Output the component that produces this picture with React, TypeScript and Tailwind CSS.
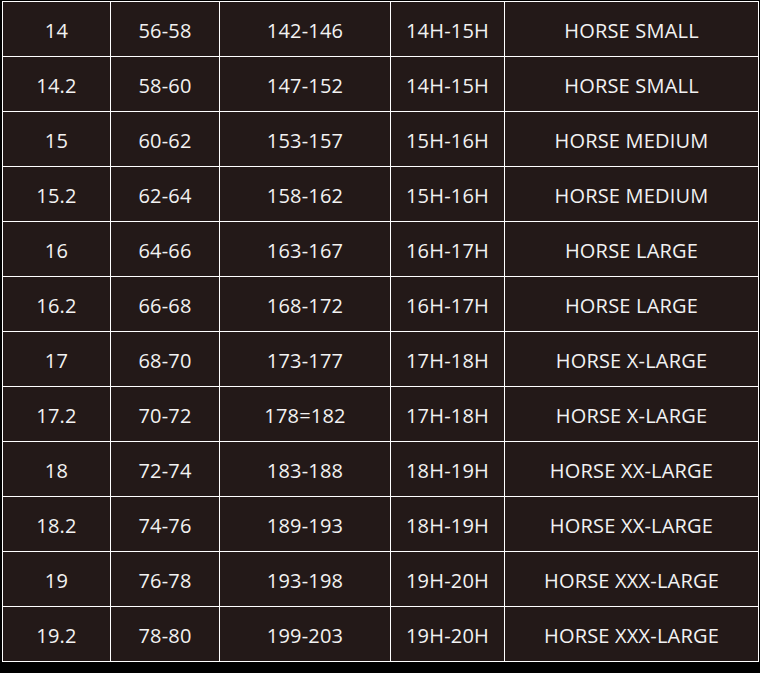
const rows: [string, string, string, string, string][] = [
  ['14', '56-58', '142-146', '14H-15H', 'HORSE SMALL'],
  ['14.2', '58-60', '147-152', '14H-15H', 'HORSE SMALL'],
  ['15', '60-62', '153-157', '15H-16H', 'HORSE MEDIUM'],
  ['15.2', '62-64', '158-162', '15H-16H', 'HORSE MEDIUM'],
  ['16', '64-66', '163-167', '16H-17H', 'HORSE LARGE'],
  ['16.2', '66-68', '168-172', '16H-17H', 'HORSE LARGE'],
  ['17', '68-70', '173-177', '17H-18H', 'HORSE X-LARGE'],
  ['17.2', '70-72', '178=182', '17H-18H', 'HORSE X-LARGE'],
  ['18', '72-74', '183-188', '18H-19H', 'HORSE XX-LARGE'],
  ['18.2', '74-76', '189-193', '18H-19H', 'HORSE XX-LARGE'],
  ['19', '76-78', '193-198', '19H-20H', 'HORSE XXX-LARGE'],
  ['19.2', '78-80', '199-203', '19H-20H', 'HORSE XXX-LARGE'],
];

export default function App() {
  return (
    <div className="w-[760px] h-[673px] bg-black pt-px pl-[2px]">
      <div
        className="grid grid-cols-[107px_108px_170px_113px_253px] auto-rows-[54px] gap-px bg-white p-px w-fit"
        style={{ fontFamily: '"Open Sans", "Noto Sans", sans-serif' }}
      >
        {rows.map((r, i) =>
          r.map((c, j) => (
            <div
              key={`${i}-${j}`}
              className="bg-[#231918] text-[#f2f2f2] text-[20px] tracking-[0.2px] pt-[3px] flex items-center justify-center"
            >
              {c}
            </div>
          ))
        )}
      </div>
    </div>
  );
}
